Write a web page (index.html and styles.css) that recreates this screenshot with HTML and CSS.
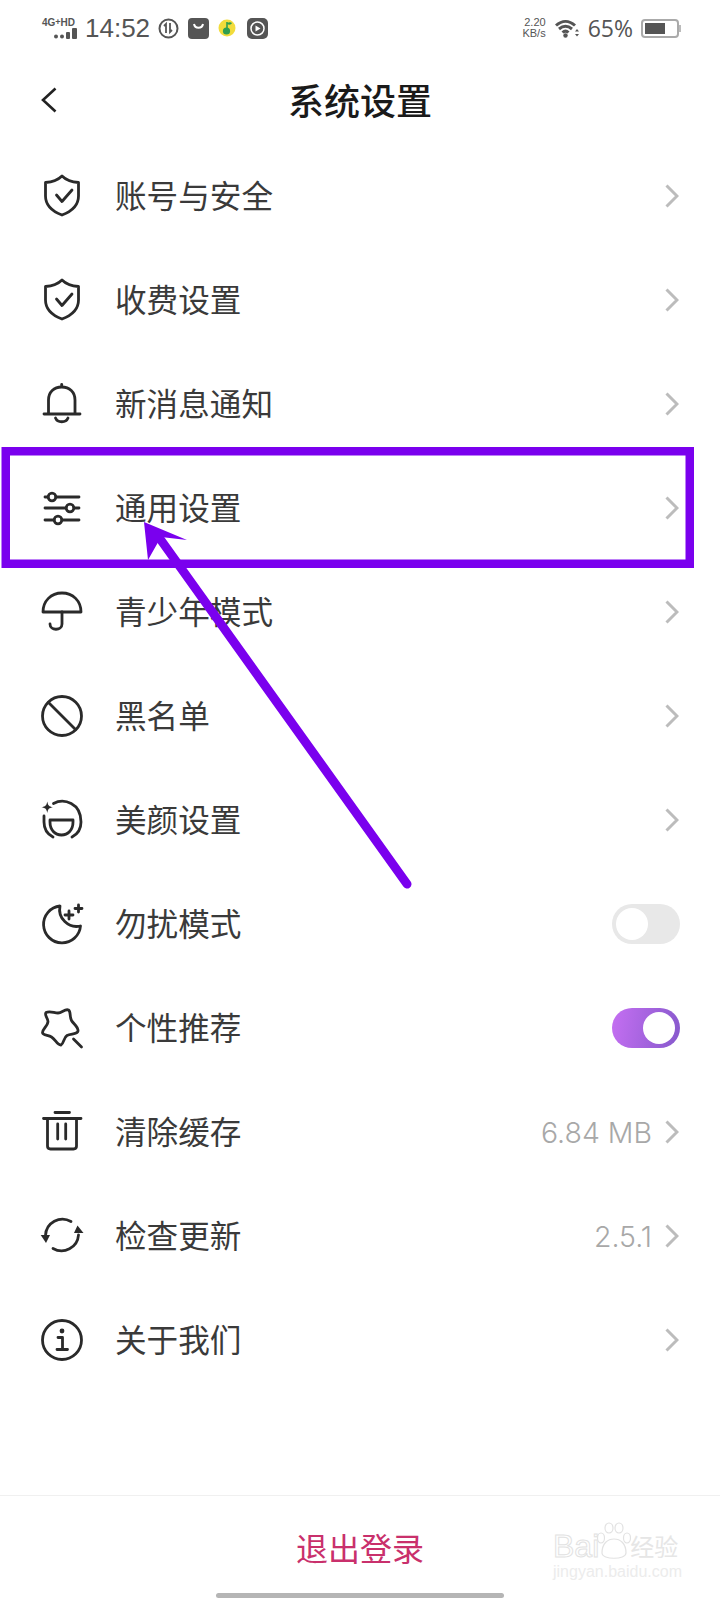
FILE: index.html
```html
<!DOCTYPE html>
<html lang="zh-CN">
<head>
<meta charset="UTF-8" />
<meta name="viewport" content="width=device-width, initial-scale=1" />
<title>系统设置</title>
<link rel="stylesheet" href="styles.css">
</head>
<body>

<div class="page">

  <div class="statusbar">
    <div class="status-left">
      <div class="signal">
        <span class="net">4G<sup>+</sup>HD</span>
        <svg class="bars" width="26" height="11" viewBox="0 0 26 11"><circle cx="3" cy="8.5" r="2" /><circle cx="9" cy="8.5" r="2" /><rect x="13" y="4" width="4" height="7" rx="1" /><rect x="19" y="0" width="5" height="11" rx="1" /></svg>
      </div>
      <span class="clock">14:52</span>
      <svg class="note" width="21" height="21" viewBox="0 0 21 21"><circle cx="10.5" cy="10.5" r="9" fill="none" stroke="#555" stroke-width="2" /><path d="M8 15V6L6 8M12 5v9l2-2" fill="none" stroke="#555" stroke-width="1.8" /></svg>
      <svg class="note" width="21" height="21" viewBox="0 0 21 21"><rect width="21" height="21" rx="4" fill="#555" /><path d="M6 6c1 5 8 5 9 0" fill="none" stroke="#fff" stroke-width="2" /></svg>
      <svg class="note wide" width="18" height="18" viewBox="0 0 18 18"><circle cx="9" cy="9" r="8.5" fill="#f2dc3c" /><path d="M9 3v7" stroke="#2f9e4f" stroke-width="1.6" /><circle cx="8.5" cy="12" r="3.6" fill="#2f9e4f" /><path d="M9 4c2-1 4-1 5 0-1 2-3 2-5 1z" fill="#2f9e4f" /></svg>
      <svg class="note" width="21" height="21" viewBox="0 0 21 21"><rect width="21" height="21" rx="5" fill="#555" /><circle cx="10.5" cy="10.5" r="6.5" fill="none" stroke="#fff" stroke-width="1.5" /><path d="M8.5 7.5v6l5-3z" fill="#fff" /></svg>
    </div>
    <div class="status-right">
      <div class="speed"><span>2.20</span><span>KB/s</span></div>
      <svg class="wifi" width="25" height="19" viewBox="0 0 25 19"><path d="M1 6.5c6-5.500 13-5.500 19 0M4 10c4.500-3.800 8.500-3.800 13 0M7.500 13.500c2-1.800 4-1.800 6 0" fill="none" stroke="#555" stroke-width="3" /><circle cx="10.500" cy="16.500" r="2.200" fill="#555" /><path d="M20 12.500h4l-2-2.500zM20 15h4l-2 2.500z" fill="#555" /></svg>
      <span class="percent">65%</span>
      <div class="battery"><div class="battery-level"></div></div>
    </div>
  </div>

  <div class="header">
    <svg class="back" width="16" height="26" viewBox="0 0 16 26"><path d="M14.500 1.500L2 13l12.500 11.500" /></svg>
    <h1 class="title">系统设置</h1>
  </div>

  <ul class="menu">
    <li class="row">
      <svg class="icon" viewBox="0 0 44 44"><path d="M22 2C26 6 32 8 38.500 8.500V22C38.500 32 30 38 22 41C14 38 5.500 32 5.500 22V8.500C12 8 18 6 22 2Z" /><path d="M16.500 21l5.500 6.500L32 16" /></svg>
      <span class="label">账号与安全</span>
      <svg class="chevron" viewBox="0 0 14 24"><path d="M1.500 1.500L12 12 1.500 22.500" /></svg>
    </li>
    <li class="row">
      <svg class="icon" viewBox="0 0 44 44"><path d="M22 2C26 6 32 8 38.500 8.500V22C38.500 32 30 38 22 41C14 38 5.500 32 5.500 22V8.500C12 8 18 6 22 2Z" /><path d="M16.500 21l5.500 6.500L32 16" /></svg>
      <span class="label">收费设置</span>
      <svg class="chevron" viewBox="0 0 14 24"><path d="M1.500 1.500L12 12 1.500 22.500" /></svg>
    </li>
    <li class="row">
      <svg class="icon" viewBox="0 0 44 44"><path d="M8.500 31V18C8.500 10 14 5 21.700 5C29.500 5 35 10 35 18V31" /><path d="M4 32H40" /><path d="M15.500 36C17.500 41 26 41 28 36" /><path d="M21.700 2.500V4" /></svg>
      <span class="label">新消息通知</span>
      <svg class="chevron" viewBox="0 0 14 24"><path d="M1.500 1.500L12 12 1.500 22.500" /></svg>
    </li>
    <li class="row">
      <svg class="icon" viewBox="0 0 44 44"><path d="M5 11H8M16 11H39M5 22H26M34 22H39M5 34H14M22 34H39" /><circle cx="12" cy="11" r="3.800" /><circle cx="30" cy="22" r="3.800" /><circle cx="18" cy="34" r="3.800" /></svg>
      <span class="label">通用设置</span>
      <svg class="chevron" viewBox="0 0 14 24"><path d="M1.500 1.500L12 12 1.500 22.500" /></svg>
    </li>
    <li class="row">
      <svg class="icon" viewBox="0 0 44 44"><path d="M3 22C3 11 11 3 22 3C33 3 41 11 41 22Z" /><path d="M22 22V34C22 41 10 41 10 34" /></svg>
      <span class="label">青少年模式</span>
      <svg class="chevron" viewBox="0 0 14 24"><path d="M1.500 1.500L12 12 1.500 22.500" /></svg>
    </li>
    <li class="row">
      <svg class="icon" viewBox="0 0 44 44"><circle cx="22" cy="22" r="19.500" /><path d="M8.500 8.500L35.500 35.500" /></svg>
      <span class="label">黑名单</span>
      <svg class="chevron" viewBox="0 0 14 24"><path d="M1.500 1.500L12 12 1.500 22.500" /></svg>
    </li>
    <li class="row">
      <svg class="icon" viewBox="0 0 44 44"><path d="M13.500 5.500C24 0 41 5 41 24C41 31 38 36 32 39" /><path d="M4 18V24C4 31 7 36 13 39" /><path d="M10 22H33V24C33 32 28 37 21.500 37C15 37 10 32 10 24Z" /><path class="fill" d="M7.300 3.500C8 7.500 9 8.500 13 9.300C9 10 8 11 7.300 15C6.500 11 5.500 10 1.500 9.300C5.500 8.500 6.500 7.500 7.300 3.500Z" /></svg>
      <span class="label">美颜设置</span>
      <svg class="chevron" viewBox="0 0 14 24"><path d="M1.500 1.500L12 12 1.500 22.500" /></svg>
    </li>
    <li class="row">
      <svg class="icon" viewBox="0 0 44 44"><path d="M20 4A18.500 18.500 0 1 0 40.500 24A17 17 0 0 1 20 4Z" /><path d="M29 9V17M25 13H33M38.500 3V10M35 6.500H42" /></svg>
      <span class="label">勿扰模式</span>
      <span class="switch"></span>
    </li>
    <li class="row">
      <svg class="icon" viewBox="0 0 44 44"><path d="M6 6.500C10 4.500 14 7 18 7C22 7 25 2.500 28.500 4C31 5.500 29.500 11 31.500 14.500C33.500 18 38.500 21 38 25C37.500 28.500 31 27.500 27 29.500C23.500 31.500 24 37.500 21 39C17.500 39.500 15.500 33.500 11.500 31C8 29 2.500 29.500 2.500 26.500C2.500 23 8 19.500 8 15.500C8 12 4 9 6 6.500Z" /><path d="M33.500 33L41.500 41" /></svg>
      <span class="label">个性推荐</span>
      <span class="switch on"></span>
    </li>
    <li class="row">
      <svg class="icon" viewBox="0 0 44 44"><path d="M15 2.500H29.500M3.500 8.500H41M7.500 8.500V36C7.500 38 8.500 39 10.500 39H33.500C35.500 39 36.500 38 36.500 36V8.500M17.700 14V29M25.700 14V29" /></svg>
      <span class="label">清除缓存</span>
      <span class="value">6.84 MB</span>
      <svg class="chevron" viewBox="0 0 14 24"><path d="M1.500 1.500L12 12 1.500 22.500" /></svg>
    </li>
    <li class="row">
      <svg class="icon" viewBox="0 0 44 44"><path d="M5.500 21.500A17 17 0 0 1 31 7.500" /><path d="M38.500 21A17 17 0 0 1 13 34.500" /><path class="fill" d="M0.700 21L10 21 6 29Z" /><path class="fill" d="M37.500 11.500L34 19 43.500 19Z" /></svg>
      <span class="label">检查更新</span>
      <span class="value">2.5.1</span>
      <svg class="chevron" viewBox="0 0 14 24"><path d="M1.500 1.500L12 12 1.500 22.500" /></svg>
    </li>
    <li class="row">
      <svg class="icon" viewBox="0 0 44 44"><circle cx="22" cy="22" r="19.500" /><circle class="fill" cx="22" cy="13" r="2.400" /><path d="M18 19.500H22.500V31M17 31.500H27.500" /></svg>
      <span class="label">关于我们</span>
      <svg class="chevron" viewBox="0 0 14 24"><path d="M1.500 1.500L12 12 1.500 22.500" /></svg>
    </li>
  </ul>

  <div class="footer">
    <span class="logout">退出登录</span>
    <div class="homebar"></div>
  </div>

  <!-- annotation drawn on top of the screenshot -->
  <svg class="annotation" width="720" height="1600" viewBox="0 0 720 1600">
    <rect x="5.750" y="451.250" width="684" height="112.500" fill="none" stroke="#7a00ee" stroke-width="8.500" />
    <path d="M407 884L158 536" fill="none" stroke="#7a00ee" stroke-width="9" stroke-linecap="round" />
    <path d="M144 522L187 540L161 537L148 560Z" fill="#7a00ee" />
  </svg>

  <div class="watermark">
    <div class="wm-top">
      <span class="wm-logo">Bai</span>
      <svg class="wm-paw" width="36" height="40" viewBox="0 0 36 40"><ellipse cx="5" cy="16" rx="3.500" ry="5" /><ellipse cx="13" cy="6" rx="4" ry="5" /><ellipse cx="23" cy="6" rx="4" ry="5" /><ellipse cx="31" cy="16" rx="3.500" ry="5" /><path d="M6 31C6 21 12 17 18 17C24 17 30 21 30 31C30 38 6 38 6 31Z" /></svg>
      <span class="wm-cn">经验</span>
    </div>
    <div class="wm-url">jingyan.baidu.com</div>
  </div>

</div>

</body>
</html>
```

FILE: styles.css
```css
* {
  box-sizing: border-box;
}
body {
  margin: 0;
  background: #fff;
  font-family: "Noto Sans CJK SC", "Liberation Sans", sans-serif;
}
.page {
  position: relative;
  width: 720px;
  height: 1600px;
  display: flex;
  flex-direction: column;
  overflow: hidden;
  background: #fff;
}

/* status bar */
.statusbar {
  height: 56px;
  padding: 0 40px 0 42px;
  display: flex;
  justify-content: space-between;
  align-items: center;
  color: #555;
  font-family: "Liberation Sans", sans-serif;
}
.status-left, .status-right {
  display: flex;
  align-items: center;
}
.signal {
  width: 38px;
  display: flex;
  flex-direction: column;
  align-items: flex-end;
  margin-right: 5px;
}
.net {
  font-size: 10px;
  font-weight: 700;
  line-height: 11px;
  white-space: nowrap;
  align-self: flex-start;
}
.net sup {
  font-size: 9px;
  line-height: 0;
  vertical-align: 1px;
}
.bars {
  fill: #555;
  margin-right: 1px;
}
.clock {
  font-size: 26px;
  width: 73px;
}
.note {
  margin-right: 9px;
}
.note.wide {
  margin-right: 11px;
}
.speed {
  display: flex;
  flex-direction: column;
  align-items: flex-end;
  font-size: 11px;
  line-height: 11px;
  margin-right: 9px;
}
.wifi {
  margin-right: 8px;
}
.percent {
  font-size: 23px;
  font-family: "Open Sans", sans-serif;
  margin-right: 8px;
}
.battery {
  position: relative;
  width: 38px;
  height: 19px;
  padding: 2px;
  border: 2px solid #aaa;
  border-radius: 4px;
  margin-right: 1px;
}
.battery::after {
  content: "";
  position: absolute;
  right: -4px;
  top: 4px;
  width: 2px;
  height: 7px;
  background: #bbb;
}
.battery-level {
  width: 65%;
  height: 100%;
  background: #555;
}

/* header */
.header {
  position: relative;
  height: 88px;
  padding-bottom: 2px;
  display: flex;
  align-items: center;
  justify-content: center;
}
.back {
  position: absolute;
  left: 41px;
  top: 31px;
  fill: none;
  stroke: #222;
  stroke-width: 2.6;
}
.title {
  margin: 0;
  font-size: 36px;
  font-weight: 500;
  color: #1a1a1a;
}

/* rows */
.menu {
  list-style: none;
  margin: 0;
  padding: 0;
}
.row {
  height: 104px;
  padding: 0 40px;
  display: flex;
  align-items: center;
}
.icon {
  width: 44px;
  height: 44px;
  flex: none;
  margin-right: 31px;
  fill: none;
  stroke: #2a2a2a;
  stroke-width: 2.8;
  stroke-linecap: round;
  stroke-linejoin: round;
  overflow: visible;
}
.icon .fill {
  fill: #2a2a2a;
  stroke: none;
}
.label {
  flex: 1;
  font-size: 31.600px;
  padding-bottom: 4px;
  color: #3a3a3a;
}
.value {
  font-family: Inter, "Liberation Sans", sans-serif;
  font-size: 28.500px;
  font-weight: 300;
  color: #a8a8a8;
  margin-right: 14px;
}
.chevron {
  width: 14px;
  height: 24px;
  flex: none;
  fill: none;
  stroke: #bcbcbc;
  stroke-width: 3;
  position: relative;
  left: -1px;
}

/* switches */
.switch {
  position: relative;
  width: 68px;
  height: 40px;
  border-radius: 20px;
  background: #e8e8e8;
}
.switch::after {
  content: "";
  position: absolute;
  left: 4px;
  top: 4px;
  width: 32px;
  height: 32px;
  border-radius: 50%;
  background: #fff;
}
.switch.on {
  background: linear-gradient(100deg, #c56ff2, #8659cc);
}
.switch.on::after {
  left: 31px;
}

/* footer */
.footer {
  margin-top: auto;
  height: 105px;
  border-top: 1px solid #f0f0f0;
  display: flex;
  flex-direction: column;
  align-items: center;
}
.logout {
  margin-top: 28px;
  font-size: 32px;
  line-height: 46px;
  color: #c9306c;
}
.homebar {
  margin-top: auto;
  margin-bottom: 2px;
  width: 288px;
  height: 5px;
  border-radius: 3px;
  background: #b5b5b5;
}

/* overlays */
.annotation {
  position: absolute;
  left: 0;
  top: 0;
  pointer-events: none;
}
.watermark {
  position: absolute;
  left: 553px;
  top: 1522px;
  width: 130px;
  color: #ececec;
}
.wm-top {
  display: flex;
  align-items: flex-end;
  height: 40px;
}
.wm-logo {
  font-family: "Liberation Sans", sans-serif;
  font-size: 32px;
  line-height: 32px;
  color: #fff;
  -webkit-text-stroke: 1px #e2e2e2;
}
.wm-paw {
  margin-left: -3px;
  fill: none;
  stroke: #e2e2e2;
  stroke-width: 1.200;
}
.wm-cn {
  font-size: 24px;
  line-height: 32px;
  margin-left: -2px;
  color: #e6e6e6;
  white-space: nowrap;
}
.wm-url {
  font-family: "Liberation Sans", sans-serif;
  font-size: 16px;
  line-height: 16px;
  margin-top: 2px;
  white-space: nowrap;
}
```
